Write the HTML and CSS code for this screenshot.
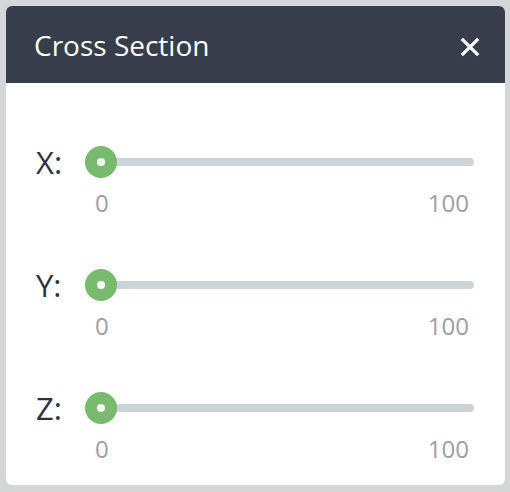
FILE: index.html
```html
<!DOCTYPE html>
<html lang="en">
<head>
<meta charset="utf-8">
<title>Cross Section</title>
<link rel="stylesheet" href="styles.css">
</head>
<body>
<div class="panel">
  <div class="header">
    <span class="title">Cross Section</span>
    <button class="close" aria-label="Close">
      <svg width="20" height="20" viewBox="0 0 20 20"><path d="M1.8 1.8L18.2 18.2M18.2 1.8L1.8 18.2" stroke="#fff" stroke-width="3.3" fill="none"/></svg>
    </button>
  </div>
  <div class="body">
    <div class="row">
      <span class="label">X:</span>
      <div class="slider"><div class="track"></div><div class="thumb"></div></div>
      <div class="scale"><span>0</span><span>100</span></div>
    </div>
    <div class="row">
      <span class="label">Y:</span>
      <div class="slider"><div class="track"></div><div class="thumb"></div></div>
      <div class="scale"><span>0</span><span>100</span></div>
    </div>
    <div class="row">
      <span class="label">Z:</span>
      <div class="slider"><div class="track"></div><div class="thumb"></div></div>
      <div class="scale"><span>0</span><span>100</span></div>
    </div>
  </div>
</div>
</body>
</html>
```
FILE: styles.css
```css
html, body {
  margin: 0;
  padding: 0;
}
body {
  background: #d5d6d8;
  padding: 6px 5px 7px 6px;
  font-family: "Open Sans", "DejaVu Sans", sans-serif;
  width: 510px;
  height: 492px;
  box-sizing: border-box;
}
.panel {
  width: 499px;
  height: 479px;
  background: #ffffff;
  border-radius: 6px;
  overflow: hidden;
  display: flex;
  flex-direction: column;
}
.header {
  height: 77px;
  background: #383d4c;
  display: flex;
  align-items: center;
  justify-content: space-between;
  padding: 0 25px 0 28px;
  box-sizing: border-box;
  flex: none;
}
.title {
  color: #ffffff;
  font-size: 28px;
  line-height: 32px;
}
.close {
  background: none;
  border: 0;
  padding: 0;
  width: 20px;
  height: 20px;
  display: flex;
  margin-top: 4px;
}
.body {
  padding: 63px 31px 0 30px;
  display: flex;
  flex-direction: column;
  gap: 54px;
}
.row {
  display: grid;
  grid-template-columns: 49px 1fr;
}
.label {
  font-size: 31px;
  line-height: 32px;
  color: #2d3143;
}
.slider {
  position: relative;
  height: 32px;
  display: flex;
  align-items: center;
}
.track {
  width: 100%;
  height: 8px;
  border-radius: 4px;
  background: #ccd4d7;
}
.thumb {
  position: absolute;
  left: 0;
  top: 0;
  width: 32px;
  height: 32px;
  border-radius: 50%;
  background: #78bb6e;
  display: flex;
  align-items: center;
  justify-content: center;
}
.thumb::after {
  content: "";
  width: 8px;
  height: 8px;
  border-radius: 50%;
  background: #ffffff;
}
.scale {
  grid-column: 2;
  display: flex;
  justify-content: space-between;
  padding: 0 5px 0 10px;
  margin-top: 13px;
  font-size: 24px;
  line-height: 24px;
  color: #9b9fa4;
}
```
